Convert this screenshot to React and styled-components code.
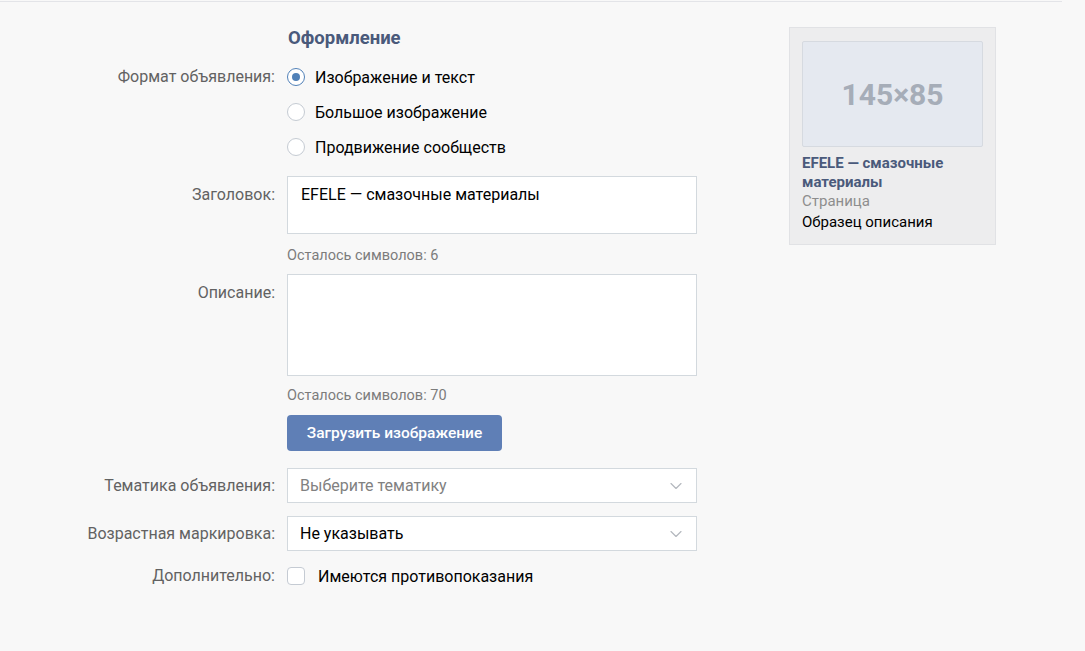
import styled, { createGlobalStyle } from "styled-components";
import { ChevronDown } from "lucide-react";

const GlobalStyle = createGlobalStyle`
  html, body {
    margin: 0;
    padding: 0;
    background: #f8f8f8;
  }
  body {
    font-family: Roboto, "Liberation Sans", sans-serif;
    color: #000;
  }
`;

const Page = styled.div`
  width: 1085px;
  height: 651px;
  box-sizing: border-box;
`;

const TopLine = styled.div`
  width: 1062px;
  height: 1px;
  margin-top: 1px;
  background: #e3e4e8;
`;

const Layout = styled.div`
  display: flex;
  align-items: flex-start;
`;

const Form = styled.div`
  display: flex;
  flex-direction: column;
  padding-top: 25px;
`;

const Row = styled.div`
  display: grid;
  grid-template-columns: 275px 410px;
  column-gap: 12px;
  align-items: start;
  margin-top: ${(p) => p.$mt || 0}px;
`;

const Label = styled.div`
  text-align: right;
  font-size: 16px;
  line-height: 18px;
  color: #626262;
  padding-top: ${(p) => p.$pt || 0}px;
`;

const Heading = styled.div`
  font-size: 18.5px;
  font-weight: 700;
  line-height: 22px;
  color: #4a5a7b;
  padding-left: 1px;
`;

const RadioList = styled.div`
  display: flex;
  flex-direction: column;
  gap: 17px;
`;

const Option = styled.div`
  display: flex;
  align-items: center;
  height: 18px;
  font-size: 16px;
  color: #000;
`;

const Radio = styled.span`
  width: 18px;
  height: 18px;
  box-sizing: border-box;
  border-radius: 50%;
  border: 1px solid ${(p) => (p.$checked ? "#5181b8" : "#c5cbd3")};
  background: #fff;
  display: flex;
  align-items: center;
  justify-content: center;
  margin-right: 10px;
  &::after {
    content: "";
    width: 8px;
    height: 8px;
    border-radius: 50%;
    background: ${(p) => (p.$checked ? "#5181b8" : "transparent")};
  }
`;

const Box = styled.div`
  box-sizing: border-box;
  height: ${(p) => p.$h}px;
  background: #fff;
  border: 1px solid #d3d9de;
  padding: 9px 13px;
  font-size: 16px;
  line-height: 18px;
  color: #000;
`;

const Counter = styled.div`
  font-size: 14.5px;
  line-height: 18px;
  color: #7c7c7c;
  margin-top: ${(p) => p.$mt || 0}px;
`;

const Button = styled.button`
  display: block;
  width: 215px;
  height: 36px;
  border: none;
  border-radius: 4px;
  background: #5f7fb6;
  color: #fff;
  font-family: Roboto, "Liberation Sans", sans-serif;
  font-size: 15.5px;
  font-weight: 500;
  padding: 0;
  margin-top: 10px;
`;

const Select = styled.div`
  box-sizing: border-box;
  height: 35px;
  background: #fff;
  border: 1px solid #d3d9de;
  display: flex;
  align-items: center;
  justify-content: space-between;
  padding: 0 10px 0 12px;
  font-size: 16px;
  color: ${(p) => (p.$placeholder ? "#818181" : "#000")};
`;

const CheckRow = styled.div`
  display: flex;
  align-items: center;
  height: 18px;
  font-size: 16px;
`;

const Checkbox = styled.span`
  width: 18px;
  height: 18px;
  box-sizing: border-box;
  border: 1px solid #c5cbd3;
  border-radius: 4px;
  background: #fff;
  margin-right: 13px;
`;

const Preview = styled.div`
  margin-left: 92px;
  margin-top: 25px;
  width: 207px;
  height: 218px;
  box-sizing: border-box;
  background: #ededee;
  border: 1px solid #e1e2e5;
  padding: 13px 12px 0 12px;
`;

const PreviewImage = styled.div`
  width: 181px;
  height: 106px;
  box-sizing: border-box;
  background: #e5e9f0;
  border: 1px solid #d6dae0;
  border-radius: 2px;
  display: flex;
  align-items: center;
  justify-content: center;
  font-size: 30px;
  font-weight: 700;
  color: #a6adb8;
`;

const PreviewTitle = styled.div`
  margin-top: 7px;
  font-size: 15px;
  font-weight: 700;
  line-height: 19px;
  color: #4a5a7b;
`;

const PreviewType = styled.div`
  font-size: 15px;
  line-height: 19px;
  color: #8d8d8d;
`;

const PreviewText = styled.div`
  font-size: 15px;
  line-height: 22px;
  color: #000;
`;

const formats = [
  { label: "Изображение и текст", checked: true },
  { label: "Большое изображение", checked: false },
  { label: "Продвижение сообществ", checked: false },
];

export default function App() {
  return (
    <Page>
      <GlobalStyle />
      <TopLine />
      <Layout>
        <Form>
          <Row>
            <div />
            <Heading>Оформление</Heading>
          </Row>

          <Row $mt={19}>
            <Label>Формат объявления:</Label>
            <RadioList>
              {formats.map((f) => (
                <Option key={f.label}>
                  <Radio $checked={f.checked} />
                  {f.label}
                </Option>
              ))}
            </RadioList>
          </Row>

          <Row $mt={20}>
            <Label $pt={10}>Заголовок:</Label>
            <div>
              <Box $h={58}>EFELE — смазочные материалы</Box>
              <Counter $mt={13}>Осталось символов: 6</Counter>
            </div>
          </Row>

          <Row $mt={9}>
            <Label $pt={10}>Описание:</Label>
            <div>
              <Box $h={102} />
              <Counter $mt={11}>Осталось символов: 70</Counter>
              <Button>Загрузить изображение</Button>
            </div>
          </Row>

          <Row $mt={17}>
            <Label $pt={9}>Тематика объявления:</Label>
            <Select $placeholder>
              Выберите тематику
              <ChevronDown size={20} color="#b4b8be" strokeWidth={1.4} />
            </Select>
          </Row>

          <Row $mt={13}>
            <Label $pt={9}>Возрастная маркировка:</Label>
            <Select>
              Не указывать
              <ChevronDown size={20} color="#b4b8be" strokeWidth={1.4} />
            </Select>
          </Row>

          <Row $mt={16}>
            <Label>Дополнительно:</Label>
            <CheckRow>
              <Checkbox />
              Имеются противопоказания
            </CheckRow>
          </Row>
        </Form>

        <Preview>
          <PreviewImage>145×85</PreviewImage>
          <PreviewTitle>EFELE — смазочные материалы</PreviewTitle>
          <PreviewType>Страница</PreviewType>
          <PreviewText>Образец описания</PreviewText>
        </Preview>
      </Layout>
    </Page>
  );
}
